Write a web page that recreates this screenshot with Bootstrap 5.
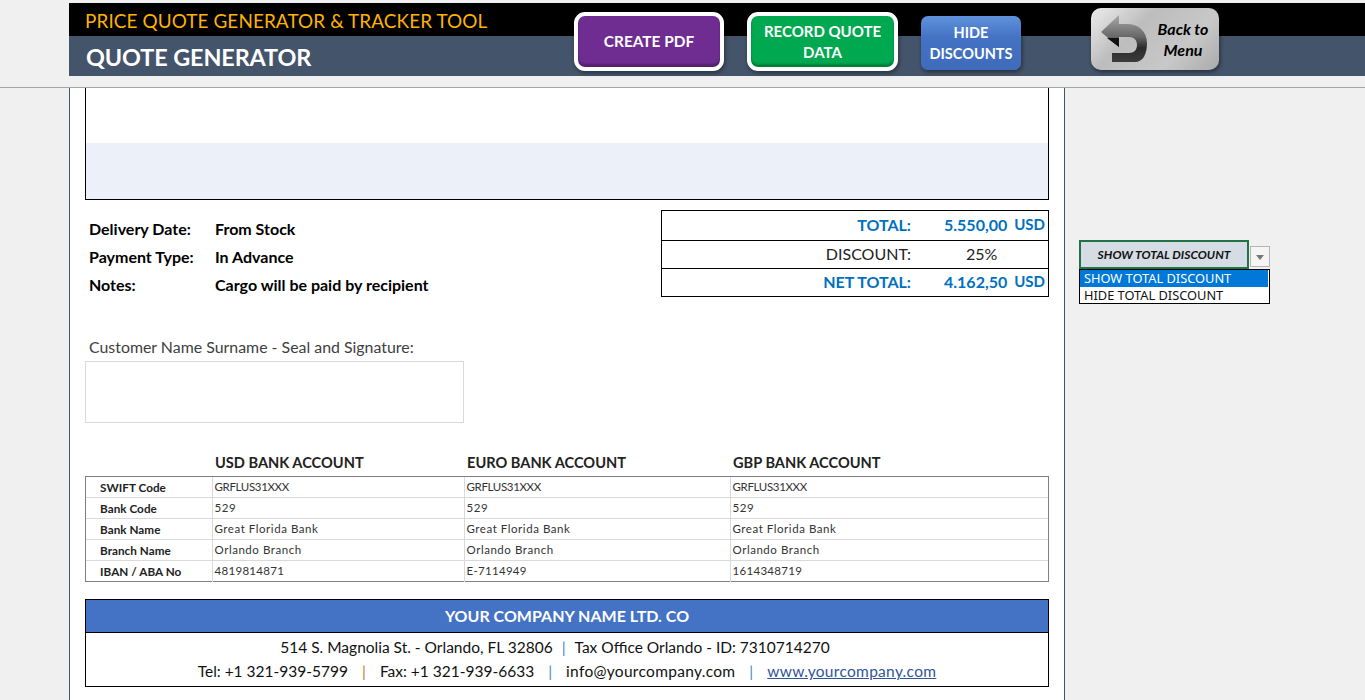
<!DOCTYPE html>
<html lang="en"><head><meta charset="utf-8"><title>Quote Generator</title>
<link href="https://cdn.jsdelivr.net/npm/bootstrap@5.3.0/dist/css/bootstrap.min.css" rel="stylesheet">
<style>
html,body{height:700px;overflow:hidden}
body{background:#f0f0f0;font-family:Lato,"Liberation Sans",sans-serif;color:#000}
.top{padding-top:3px;padding-left:69px;border-bottom:1px solid #a6a6a6;box-sizing:content-box;height:84px}
.hdr{height:73px;background:linear-gradient(#000 33px,#44546a 33px);position:relative}
.t1{height:33px;line-height:36px;padding-left:16px;color:#ffb300;font-size:18.9px;letter-spacing:.1px}
.t2{height:40px;line-height:42px;padding-left:17px;color:#fff;font-size:23.4px;font-weight:700;letter-spacing:-.1px}
.btns{padding-left:505px;padding-top:9px;gap:24px}
.xb{display:flex;align-items:center;justify-content:center;text-align:center;color:#fff;font-weight:700;line-height:21px;font-size:15px;box-shadow:1px 2px 4px rgba(0,0,0,.45)}
.b1{width:150px;height:59px;background:#6f2c91;border:4px solid #fff;border-radius:11px;font-size:15.4px;box-shadow:inset 0 -3px 2px rgba(0,0,0,.25),1px 2px 4px rgba(0,0,0,.4)}
.b2{width:151px;height:59px;background:#00a84f;border:4px solid #fff;border-radius:11px;margin-left:-1px;box-shadow:inset 0 -3px 2px rgba(0,0,0,.25),1px 2px 4px rgba(0,0,0,.4)}
.b3{width:100px;height:54px;margin-top:4px;background:linear-gradient(#5f92dc,#4472c4 40%,#3f6bbb);border-radius:7px;margin-left:-1px;font-size:14.5px}
.b4{width:128px;height:62px;margin-top:-4px;margin-left:46px;background:linear-gradient(135deg,#ececec,#bdbdbd 35%,#c8c8c8 70%,#aaa);border-radius:10px;color:#000;font-style:italic;gap:3px;justify-content:flex-start;padding-left:6px}
.b4 span{width:54px;font-size:16px;line-height:21px;flex:none}
.b4 svg{flex:none}
.sheet{height:612px}
.paper{width:996px;margin-left:69px;background:#fff;border-left:1px solid #44546a;border-right:1px solid #44546a;padding:0 15px;height:612px;overflow:hidden}
.topbox{height:112px;border:1px solid #000;border-top:0;padding-top:55px}
.topbox div{height:56px;background:#ecf0f9}
.info{height:161px;padding-top:10px}
.meta{padding:5px 0 0 4px;font-size:16px;font-weight:700;line-height:28px}
.meta span{display:inline-block;width:126px}
.totals{width:388px;height:87px;border:1px solid #000;font-size:16px}
.totals .r{height:28px;display:flex;align-items:center;border-bottom:1px solid #000;color:#0070c0;font-weight:700;padding-bottom:2px}
.totals .r:first-child{height:30px}
.totals .r:last-child{border-bottom:0;height:27px}
.totals .l{width:249px;text-align:right}
.totals .v{width:95px;padding-left:33px;white-space:nowrap}
.totals .u{width:39px;text-align:right;font-size:15px}
.totals .d{color:#222;font-weight:400}
.totals .p{padding-left:55px}
.sig{margin-top:-26px;padding-left:4px;color:#404040;font-size:15.9px;height:24px;line-height:24px}
.sigbox{width:379px;height:62px;border:1px solid #d9d9d9;margin-top:2px}
.bh{margin-top:29px;height:24px;font-size:14.6px;font-weight:700;color:#222;line-height:22px}
.bh span{display:block}
.bh .a{width:130px}.bh .c{width:252px}.bh .e{width:266px}
.bankwrap{height:106px;border:1px solid #808080}
.bank{width:962px;margin:0;table-layout:fixed;border-collapse:collapse;font-size:11.5px}
.bank td{padding:0 0 0 2px;height:21px;border:1px solid #d9d9d9;line-height:20px;color:#333;letter-spacing:.55px}
.bank tr:first-child td{border-top:0;height:20px;line-height:20px;letter-spacing:-.35px}
.bank tr:last-child td{border-bottom:0;letter-spacing:.3px}
.bank td:first-child,.bank tr:first-child td:first-child,.bank tr:last-child td:first-child{border-left:0;padding-left:14px;font-weight:700;letter-spacing:.05px;color:#222;font-size:11.7px}
.bank td:last-child{border-right:0}
.foot{margin-top:17px;height:88px;border:1px solid #000;text-align:center;font-size:15.5px}
.foot h6{margin:0;height:33px;line-height:31px;background:#4472c4;color:#fff;font-size:16px;font-weight:700;border-bottom:1px solid #000}
.foot p{margin:0;height:24px;line-height:24px;color:#111}
.foot .l1{margin-top:2px;padding-right:24px}
.foot .bar{color:#3f86c6;margin:0 14px}.foot .or{color:#c0803a;margin:0 14px}
.foot .l1 .bar{margin:0 9px}
.foot .w{letter-spacing:.3px}
.foot a{color:#2f5597;letter-spacing:.3px}
.side{padding:152px 0 0 14px;width:205px}
.combo{width:171px;height:29px;background:#d6dce4;border:2px solid #217346;font-size:12px;font-weight:700;font-style:italic;text-align:center;line-height:26px;letter-spacing:.05px;color:#111}
.arrow{width:20px;height:21px;margin-top:6px;margin-left:1px;border:1px solid #b5b5b5;background:#f4f4f4;position:relative}
.arrow:after{content:"";position:absolute;left:5px;top:8px;border:4px solid transparent;border-top:5px solid #777;border-bottom:0}
.dd{width:191px;border:1px solid #000;background:#fff;font-family:"Noto Sans","Open Sans",sans-serif;font-size:12.8px;border-radius:0;height:35px}
.dd .list-group-item{padding:0 4px;border:0;border-radius:0;height:17px;line-height:17px;color:#111;background:transparent;white-space:nowrap}
.dd .list-group-item.on{background:#0078d7;color:#fff;width:188px}
</style></head><body>
<div class="top"><div class="hdr d-flex">
<div class="flex-shrink-0" style="width:0"><div class="t1 text-nowrap">PRICE QUOTE GENERATOR &amp; TRACKER TOOL</div><div class="t2 text-nowrap">QUOTE GENERATOR</div></div>
<div class="btns d-flex align-items-start">
<div class="xb b1">CREATE PDF</div>
<div class="xb b2">RECORD QUOTE<br>DATA</div>
<div class="xb b3">HIDE<br>DISCOUNTS</div>
<div class="xb b4"><svg width="56" height="54" viewBox="0 0 56 54"><defs><linearGradient id="g" x1="0" y1="0" x2="0" y2="1"><stop offset="0" stop-color="#a8a8a8"/><stop offset=".45" stop-color="#6a6a6a"/><stop offset=".7" stop-color="#2a2a2a"/><stop offset="1" stop-color="#3c3c3c"/></linearGradient></defs><path d="M22 3 4 20l18 15V25h10c5 0 8 3 8 8s-3 8-8 8H15v9h23c8 0 12-8 12-19 0-12-9-19-20-19h-8z" fill="url(#g)"/><path d="M10 26h12v9z" fill="#111"/></svg><span>Back to<br>Menu</span></div>
</div>
</div></div>
<div class="sheet d-flex">
<div class="paper flex-shrink-0">
<div class="topbox"><div></div></div>
<div class="info d-flex justify-content-between">
<div class="meta"><div><span>Delivery Date:</span>From Stock</div><div><span>Payment Type:</span>In Advance</div><div><span>Notes:</span>Cargo will be paid by recipient</div></div>
<div class="totals">
<div class="r"><div class="l">TOTAL:</div><div class="v">5.550,00</div><div class="u">USD</div></div>
<div class="r d"><div class="l">DISCOUNT:</div><div class="v p">25%</div></div>
<div class="r"><div class="l">NET TOTAL:</div><div class="v">4.162,50</div><div class="u">USD</div></div>
</div></div>
<div class="sig">Customer Name Surname - Seal and Signature:</div>
<div class="sigbox"></div>
<div class="bh d-flex"><span class="a"></span><span class="c">USD BANK ACCOUNT</span><span class="e">EURO BANK ACCOUNT</span><span>GBP BANK ACCOUNT</span></div>
<div class="bankwrap"><table class="bank"><colgroup><col style="width:126px"><col style="width:252px"><col style="width:266px"><col></colgroup><tbody>
<tr><td>SWIFT Code</td><td>GRFLUS31XXX</td><td>GRFLUS31XXX</td><td>GRFLUS31XXX</td></tr>
<tr><td>Bank Code</td><td>529</td><td>529</td><td>529</td></tr>
<tr><td>Bank Name</td><td>Great Florida Bank</td><td>Great Florida Bank</td><td>Great Florida Bank</td></tr>
<tr><td>Branch Name</td><td>Orlando Branch</td><td>Orlando Branch</td><td>Orlando Branch</td></tr>
<tr><td>IBAN / ABA No</td><td>4819814871</td><td>E-7114949</td><td>1614348719</td></tr>
</tbody></table></div>
<div class="foot"><h6>YOUR COMPANY NAME LTD. CO</h6>
<p class="l1">514 S. Magnolia St. - Orlando, FL 32806<span class="bar">|</span>Tax Office Orlando - ID: 7310714270</p>
<p>Tel: +1 321-939-5799<span class="or">|</span>Fax: +1 321-939-6633<span class="bar">|</span><span class="w">info@yourcompany.com</span><span class="bar">|</span><a href="#">www.yourcompany.com</a></p></div>
</div>
<div class="side"><div class="d-flex"><div class="combo">SHOW TOTAL DISCOUNT</div><div class="arrow"></div></div>
<div class="dd list-group"><div class="list-group-item on">SHOW TOTAL DISCOUNT</div><div class="list-group-item">HIDE TOTAL DISCOUNT</div></div></div>
</div>
<script src="https://cdn.jsdelivr.net/npm/bootstrap@5.3.0/dist/js/bootstrap.bundle.min.js"></script>
</body></html>
